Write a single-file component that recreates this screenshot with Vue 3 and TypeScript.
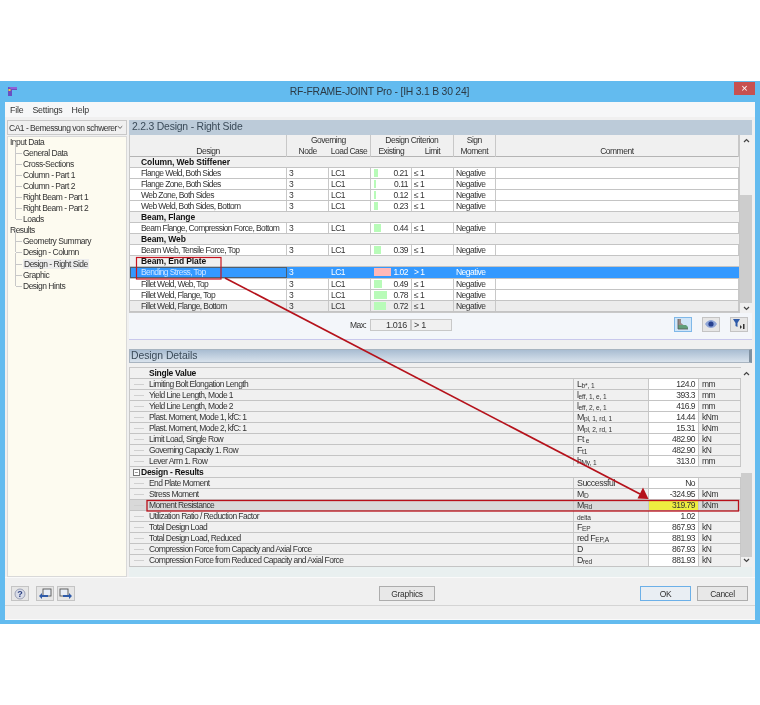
<script setup lang="ts">
interface TreeItem { label: string; child?: boolean; selected?: boolean }
interface DesignRow { label: string; group?: boolean; value?: number; limit?: string; selected?: boolean; shaded?: boolean }
interface DetailRow { label: string; group?: string; main?: string; sub?: string; small?: boolean; value?: string; unit?: string; hit?: boolean }

const tree: TreeItem[] = [
  { label: 'Input Data' },
  { label: 'General Data', child: true },
  { label: 'Cross-Sections', child: true },
  { label: 'Column - Part 1', child: true },
  { label: 'Column - Part 2', child: true },
  { label: 'Right Beam - Part 1', child: true },
  { label: 'Right Beam - Part 2', child: true },
  { label: 'Loads', child: true },
  { label: 'Results' },
  { label: 'Geometry Summary', child: true },
  { label: 'Design - Column', child: true },
  { label: 'Design - Right Side', child: true, selected: true },
  { label: 'Graphic', child: true },
  { label: 'Design Hints', child: true },
]

const designRows: DesignRow[] = [
  { label: 'Column, Web Stiffener', group: true },
  { label: 'Flange Weld, Both Sides', value: 0.21 },
  { label: 'Flange Zone, Both Sides', value: 0.11 },
  { label: 'Web Zone, Both Sides', value: 0.12 },
  { label: 'Web Weld, Both Sides, Bottom', value: 0.23 },
  { label: 'Beam, Flange', group: true },
  { label: 'Beam Flange, Compression Force, Bottom', value: 0.44 },
  { label: 'Beam, Web', group: true },
  { label: 'Beam Web, Tensile Force, Top', value: 0.39 },
  { label: 'Beam, End Plate', group: true },
  { label: 'Bending Stress, Top', value: 1.02, limit: '> 1', selected: true },
  { label: 'Fillet Weld, Web, Top', value: 0.49 },
  { label: 'Fillet Weld, Flange, Top', value: 0.78 },
  { label: 'Fillet Weld, Flange, Bottom', value: 0.72, shaded: true },
]

const detailRows: DetailRow[] = [
  { label: 'Single Value', group: 'plain' },
  { label: 'Limiting Bolt Elongation Length', main: 'L', sub: 'b*, 1', value: '124.0', unit: 'mm' },
  { label: 'Yield Line Length, Mode 1', main: 'l', sub: 'eff, 1, e, 1', value: '393.3', unit: 'mm' },
  { label: 'Yield Line Length, Mode 2', main: 'l', sub: 'eff, 2, e, 1', value: '416.9', unit: 'mm' },
  { label: 'Plast. Moment, Mode 1, kfC: 1', main: 'M', sub: 'pl, 1, rd, 1', value: '14.44', unit: 'kNm' },
  { label: 'Plast. Moment, Mode 2, kfC: 1', main: 'M', sub: 'pl, 2, rd, 1', value: '15.31', unit: 'kNm' },
  { label: 'Limit Load, Single Row', main: 'Ft', sub: ' e', value: '482.90', unit: 'kN' },
  { label: 'Governing Capacity 1. Row', main: 'F', sub: 't1', value: '482.90', unit: 'kN' },
  { label: 'Lever Arm 1. Row', main: 'h', sub: 'My, 1', value: '313.0', unit: 'mm' },
  { label: 'Design - Results', group: 'boxed' },
  { label: 'End Plate Moment', main: 'Successful', value: 'No' },
  { label: 'Stress Moment', main: 'M', sub: 'D', value: '-324.95', unit: 'kNm' },
  { label: 'Moment Resistance', main: 'M', sub: 'Rd', value: '319.79', unit: 'kNm', hit: true },
  { label: 'Utilization Ratio / Reduction Factor', sub: 'delta', value: '1.02' },
  { label: 'Total Design Load', main: 'F', sub: 'EP', value: '867.93', unit: 'kN' },
  { label: 'Total Design Load, Reduced', main: 'red F', sub: 'EP,A', value: '881.93', unit: 'kN' },
  { label: 'Compression Force from Capacity and Axial Force', main: 'D', value: '867.93', unit: 'kN' },
  { label: 'Compression Force from Reduced Capacity and Axial Force', main: 'D', sub: 'red', value: '881.93', unit: 'kN' },
]

const barWidth = (v: number) => `${Math.round(v * 17)}px`
</script>

<template>
  <div class="page">
    <div class="window">
      <div class="titlebar">
        <svg class="logo" viewBox="0 0 11 11" width="11" height="11">
          <path d="M1 1h9v3H5v6H1z" fill="#6a4fc0" />
          <path d="M2 1h8v2H4z" fill="#8f62d8" />
          <rect x="1.5" y="3" width="2" height="2" fill="#f0d040" />
        </svg>
        <span class="title">RF-FRAME-JOINT Pro - [IH 3.1 B 30 24]</span>
        <span class="close">×</span>
      </div>
      <div class="menu">
        <span>File</span><span>Settings</span><span>Help</span>
      </div>

      <div class="body">
        <aside class="side">
          <div class="combo">
            <span>CA1 - Bemessung von schwerer</span>
            <svg viewBox="0 0 7 5" width="7" height="5"><path d="M1 1l2.500 2.500L6 1" fill="none" stroke="#555" stroke-width="1.100" /></svg>
          </div>
          <div class="tree">
            <div v-for="t in tree" :key="t.label" class="tree-item" :class="{ child: t.child }">
              <span :class="{ sel: t.selected }">{{ t.label }}</span>
            </div>
          </div>
        </aside>

        <main class="main">
          <div class="section-head flat">2.2.3 Design - Right Side</div>
          <div class="table-wrap">
            <div class="design-table">
              <div class="drow dhead">
                <div class="hc"><span></span><span>Design</span></div>
                <div class="hc"><span>Governing</span><div class="sub2"><span>Node</span><span>Load Case</span></div></div>
                <div class="hc"><span>Design Criterion</span><div class="sub2"><span>Existing</span><span>Limit</span></div></div>
                <div class="hc"><span>Sign</span><span>Moment</span></div>
                <div class="hc"><span></span><span>Comment</span></div>
              </div>
              <template v-for="r in designRows" :key="r.label">
                <div v-if="r.group" class="dgroup">{{ r.label }}</div>
                <div v-else class="drow" :class="{ selected: r.selected, shaded: r.shaded }">
                  <div class="c name">{{ r.label }}</div>
                  <div class="c">3</div>
                  <div class="c">LC1</div>
                  <div class="c existing">
                    <i class="bar" :class="{ over: (r.value ?? 0) > 1 }" :style="{ width: barWidth(r.value ?? 0) }"></i>
                    <span>{{ r.value?.toFixed(2) }}</span>
                  </div>
                  <div class="c">{{ r.limit ?? '≤ 1' }}</div>
                  <div class="c">Negative</div>
                  <div class="c"></div>
                </div>
              </template>
            </div>
            <div class="scroll top-scroll">
              <svg viewBox="0 0 7 5" width="7" height="5"><path d="M1 4l2.500-2.500L6 4" fill="none" stroke="#444" stroke-width="1.200" /></svg>
              <div class="thumb"></div>
              <svg viewBox="0 0 7 5" width="7" height="5"><path d="M1 1l2.500 2.500L6 1" fill="none" stroke="#444" stroke-width="1.200" /></svg>
            </div>
          </div>

          <div class="max-bar">
            <span class="max-label">Max:</span>
            <span class="max-field val">1.016</span>
            <span class="max-field">&gt; 1</span>
            <div class="tools">
              <button class="tool on">
                <svg viewBox="0 0 14 12" width="14" height="12"><path d="M2 1h3v4l5 4h2v2H2z" fill="#9a8a88" /><path d="M2 7h8l2 2v2H2z" fill="#5f9e7a" /><path d="M2 1v10h10" fill="none" stroke="#555" stroke-width=".8" /></svg>
              </button>
              <button class="tool">
                <svg viewBox="0 0 14 10" width="14" height="10"><path d="M1 5c2-3 4-4 6-4s4 1 6 4c-2 3-4 4-6 4S3 8 1 5z" fill="#8fa6d8" /><circle cx="7" cy="5" r="2.600" fill="#26408f" /></svg>
              </button>
              <button class="tool">
                <svg viewBox="0 0 14 12" width="14" height="12"><path d="M1 1h7L5.500 5v4L3.500 8V5z" fill="#2e5aa8" /><path d="M8 7l2 2-2 2zM11 6h1.500v5H11z" fill="#333" /></svg>
              </button>
            </div>
          </div>

          <div class="section-head">Design Details</div>
          <div class="table-wrap details-wrap">
            <div class="detail-table">
              <template v-for="r in detailRows" :key="r.label">
                <div v-if="r.group" class="dtl-group" :class="r.group">
                  <span v-if="r.group === 'boxed'" class="box">−</span><span>{{ r.label }}</span>
                </div>
                <div v-else class="dtl-row" :class="{ hit: r.hit }">
                  <div class="c dname">{{ r.label }}</div>
                  <div class="c sym">{{ r.main }}<sub v-if="r.sub">{{ r.sub }}</sub></div>
                  <div class="c num">{{ r.value }}</div>
                  <div class="c unit">{{ r.unit }}</div>
                </div>
              </template>
            </div>
            <div class="scroll low-scroll">
              <svg viewBox="0 0 7 5" width="7" height="5"><path d="M1 4l2.500-2.500L6 4" fill="none" stroke="#444" stroke-width="1.200" /></svg>
              <div class="thumb"></div>
              <svg viewBox="0 0 7 5" width="7" height="5"><path d="M1 1l2.500 2.500L6 1" fill="none" stroke="#444" stroke-width="1.200" /></svg>
            </div>
          </div>
          <div class="details-tail"></div>
        </main>
      </div>

      <div class="footer">
        <div class="foot-left">
          <button class="tool">
            <svg viewBox="0 0 14 12" width="14" height="12"><circle cx="7" cy="6" r="5" fill="#d8dce8" stroke="#8a90a8" stroke-width=".8" /><text x="7" y="9.300" font-size="9" font-weight="700" text-anchor="middle" fill="#2a3f80" font-family="Liberation Sans">?</text></svg>
          </button>
          <div class="pair">
            <button class="tool">
              <svg viewBox="0 0 14 12" width="14" height="12"><rect x="5" y="1" width="8" height="7" fill="#e8edf5" stroke="#555" stroke-width=".9" /><path d="M1 8l3-3v2h6v2H4v2z" fill="#2e5aa8" /></svg>
            </button>
            <button class="tool">
              <svg viewBox="0 0 14 12" width="14" height="12"><rect x="1" y="1" width="8" height="7" fill="#e8edf5" stroke="#555" stroke-width=".9" /><path d="M13 8l-3-3v2H4v2h6v2z" fill="#2e5aa8" /></svg>
            </button>
          </div>
        </div>
        <button class="btn graphics">Graphics</button>
        <div class="foot-right">
          <button class="btn ok">OK</button>
          <button class="btn">Cancel</button>
        </div>
      </div>
      <div class="status"></div>
    </div>

    <!-- callout drawn on top of the screenshot -->
    <svg class="callout" viewBox="0 0 760 705" width="760" height="705" fill="none">
      <rect x="136.500" y="257.500" width="84.500" height="21.500" stroke="#c8141e" stroke-width="1.200" />
      <rect x="147" y="500.500" width="591.500" height="10.500" stroke="#b8101a" stroke-width="1.300" />
      <path d="M225 278L640 494" stroke="#b5121b" stroke-width="1.700" />
      <path d="M648.500 499L637.500 498.500L643 487.500z" fill="#b5121b" />
    </svg>
  </div>
</template>

<style scoped>
.page {
  position: relative;
  width: 760px;
  height: 705px;
  background: #fff;
  overflow: hidden;
  font-family: "Liberation Sans", Arial, sans-serif;
  font-size: 8.5px;
  letter-spacing: -0.5px;
  color: #333;
  filter: blur(0.3px);
}

.window {
  margin-top: 81px;
  height: 543px;
  padding: 0 5px 4px;
  box-sizing: border-box;
  background: #63bbef;
  display: flex;
  flex-direction: column;
}

.titlebar {
  height: 21px;
  flex: none;
  position: relative;
  display: flex;
  align-items: center;
  justify-content: center;
}
.logo { position: absolute; left: 2px; top: 5px; }
.title { font-size: 10.4px; letter-spacing: -0.22px; color: #2b3a45; margin-left: -1px; }
.close {
  position: absolute;
  right: 0;
  top: 1px;
  width: 21px;
  height: 13px;
  background: #c75050;
  color: #fff;
  font-size: 11px;
  letter-spacing: 0;
  line-height: 12px;
  text-align: center;
}

.menu {
  height: 15px;
  flex: none;
  background: #f6f7f8;
  display: flex;
  align-items: center;
  gap: 9px;
  padding-left: 5px;
  font-size: 8.8px;
  letter-spacing: -0.2px;
}

.body {
  flex: 1;
  min-height: 0;
  background: #f0f0f0;
  display: flex;
  gap: 2px;
  padding: 3px 3px 0 2px;
}

.side { width: 120px; flex: none; display: flex; flex-direction: column; gap: 1px; }
.combo {
  height: 15px;
  flex: none;
  box-sizing: border-box;
  border: 1px solid #c8c8c8;
  background: #f0f0f0;
  display: flex;
  align-items: center;
  justify-content: space-between;
  padding: 0 3px 0 1px;
  white-space: nowrap;
  overflow: hidden;
}
.tree {
  flex: 1;
  background: #fdfbf0;
  border: 1px solid #d9d9d9;
}
.tree-item {
  height: 11.05px;
  line-height: 11px;
  padding-left: 2px;
  position: relative;
  white-space: nowrap;
}
.tree-item.child { padding-left: 15px; }
.tree-item.child::before {
  content: "";
  position: absolute;
  left: 8px;
  top: 5px;
  width: 6px;
  border-top: 1px solid #c8c8c8;
}
.tree-item.child::after {
  content: "";
  position: absolute;
  left: 7px;
  top: -6px;
  height: 11px;
  border-left: 1px solid #c8c8c8;
}
.sel { background: #ededed; padding: 0 1px; }

.main { flex: 1; min-width: 0; display: flex; flex-direction: column; }

.section-head {
  height: 14px;
  flex: none;
  box-sizing: border-box;
  padding-left: 1px;
  font-size: 10.4px;
  letter-spacing: -0.05px;
  line-height: 12px;
  color: #3a4a58;
  background: linear-gradient(#a9bdd2, #d8e2ec);
  border: 1px solid #a8b4c0;
  border-right-width: 3px;
  border-right-color: #7f90a0;
}
.section-head.flat {
  background: #bccbd9;
  border-color: #bccbd9;
  height: 15px;
  padding-left: 2px;
  letter-spacing: -0.2px;
}

.table-wrap { display: flex; }

.design-table { flex: 1; min-width: 0; border: 1px solid #c8c8c8; border-width: 0 1px 1px; }
.drow {
  display: grid;
  grid-template-columns: 157px 42px 41.7px 41.3px 42px 41.7px 1fr;
  height: 11.05px;
  box-sizing: border-box;
  background: #fff;
  border-bottom: 1px solid #c4c4c4;
}
.dhead {
  grid-template-columns: 157px 83.7px 83.3px 41.7px 1fr;
  height: 22px;
  background: #f0f0f0;
  border-bottom: 1px solid #b4b4b4;
}
.hc {
  display: flex;
  flex-direction: column;
  text-align: center;
  line-height: 11px;
  border-right: 1px solid #c8c8c8;
}
.hc > span { height: 11px; }
.sub2 { display: grid; grid-template-columns: 1fr 1fr; }
.c {
  line-height: 11.5px;
  padding-left: 2px;
  border-right: 1px solid #c8c8c8;
  white-space: nowrap;
  overflow: hidden;
  box-sizing: border-box;
}
.name { padding-left: 11px; letter-spacing: -0.6px; }
.dgroup {
  height: 11.05px;
  box-sizing: border-box;
  background: #f0f0f0;
  border-bottom: 1px solid #c4c4c4;
  padding-left: 11px;
  line-height: 11px;
  font-weight: 700;
  letter-spacing: -0.1px;
  color: #111;
}
.existing { position: relative; text-align: right; padding-right: 3px; }
.existing span { position: relative; }
.bar { position: absolute; left: 3px; top: 1px; height: 8px; background: #b8fbb8; }
.bar.over { background: #ffb8b8; }
.drow.shaded { background: #ececec; }
.drow.selected { background: #3399ff; color: #fff; }
.drow.selected .c { border-right-color: #3399ff; }
.drow.selected .name { outline: 1px solid #4d5f70; outline-offset: -1px; color: #cfe6ff; }

.scroll {
  width: 12px;
  flex: none;
  background: #f0f0f0;
  display: flex;
  flex-direction: column;
  align-items: center;
  justify-content: space-between;
  box-sizing: border-box;
}
.thumb { width: 100%; background: #cdcdcd; }
.top-scroll { padding: 3px 0 2px; }
.top-scroll .thumb { height: 108px; margin-top: 49px; }
.low-scroll { width: 11px; padding: 4px 0; }
.low-scroll .thumb { height: 84px; margin-top: 96px; }

.max-bar {
  height: 27px;
  flex: none;
  background: #f3f6fa;
  border-bottom: 1px solid #c8c8ec;
  display: flex;
  align-items: flex-start;
  padding-top: 6px;
  padding-left: 221px;
  box-sizing: border-box;
  margin-bottom: 9px;
}
.max-label { width: 20px; line-height: 12px; }
.max-field {
  width: 41px;
  height: 12px;
  box-sizing: border-box;
  border: 1px solid #c8c8c8;
  background: #f0f0f0;
  line-height: 10px;
  font-size: 9px;
  letter-spacing: -0.3px;
  padding: 0 2px;
}
.max-field.val { text-align: right; padding-right: 3px; }
.tools { margin-left: auto; display: flex; gap: 10px; padding-right: 4px; margin-top: -2px; }
.tool {
  width: 18px;
  height: 15px;
  padding: 0;
  border: 1px solid #c4c4c4;
  background: #e6e6e6;
  display: flex;
  align-items: center;
  justify-content: center;
}
.tool.on { background: #cfe5f8; border-color: #7fb8e8; }

.details-wrap { margin-top: 4px; }
.detail-table { flex: 1; min-width: 0; border: 1px solid #c8c8c8; border-width: 1px 0 0 1px; }
.dtl-row {
  display: grid;
  grid-template-columns: 444px 75px 50px 1fr;
  height: 11.05px;
  box-sizing: border-box;
  background: #f0f0f0;
  border-bottom: 1px solid #c4c4c4;
}
.dtl-row .c { line-height: 10.5px; }
.dname { padding-left: 19px; position: relative; letter-spacing: -0.58px; }
.dname::before {
  content: "";
  position: absolute;
  left: 4px;
  top: 5px;
  width: 10px;
  border-top: 1px solid #d0d0d0;
}
.sym { padding-left: 3px; font-size: 8.8px; letter-spacing: -0.45px; }
.sym sub { font-size: 6.6px; letter-spacing: -0.1px; vertical-align: baseline; position: relative; top: 1px; }
.num { background: #fff; text-align: right; padding-right: 3px; }
.unit { padding-left: 3px; }
.dtl-group {
  height: 11.05px;
  box-sizing: border-box;
  background: #f0f0f0;
  border-bottom: 1px solid #c4c4c4;
  font-weight: 700;
  letter-spacing: -0.25px;
  color: #111;
  display: flex;
  align-items: center;
}
.dtl-group.plain { padding-left: 19px; }
.dtl-group.boxed { padding-left: 3px; }
.box {
  width: 7px;
  height: 7px;
  flex: none;
  box-sizing: border-box;
  border: 1px solid #777;
  background: #fff;
  font-size: 6px;
  font-weight: 400;
  line-height: 5px;
  text-align: center;
  margin-right: 1px;
}
.dtl-row.hit { background: #d9d9d9; }
.dtl-row.hit .num { background: #eeee40; }
.details-tail { flex: 1; background: #e9f0f0; }

.footer {
  height: 28px;
  flex: none;
  box-sizing: border-box;
  background: #f0f0f0;
  border-top: 1px solid #fafafa;
  display: grid;
  grid-template-columns: 368px 56px 1fr;
  align-items: start;
  padding: 8px 7px 0 6px;
}
.foot-left { display: flex; gap: 7px; }
.pair { display: flex; gap: 3px; }
.btn {
  height: 15px;
  padding: 0;
  border: 1px solid #adadad;
  background: #e8e8e8;
  font: 8.5px "Liberation Sans", Arial, sans-serif;
  letter-spacing: -0.3px;
  color: #333;
}
.foot-right { display: flex; justify-content: flex-end; gap: 6px; }
.foot-right .btn { width: 51px; }
.btn.ok { border-color: #6cb0e8; background: #e9eef3; }
.status {
  height: 15px;
  flex: none;
  box-sizing: border-box;
  background: #f0f0f0;
  border-top: 1px solid #d4d4d4;
  border-bottom: 1px solid #fafafa;
}

.callout { position: absolute; left: 0; top: 0; pointer-events: none; }
</style>
